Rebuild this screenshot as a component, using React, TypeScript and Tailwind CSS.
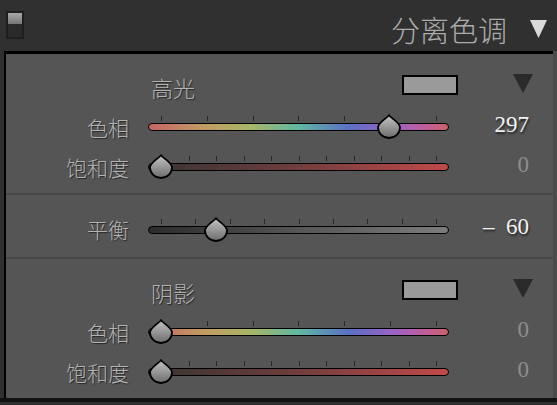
const cjk = "font-['Noto_Sans_CJK_SC',sans-serif] font-light";
const num = "font-['Liberation_Serif',serif]";

const hueBar =
  'bg-[linear-gradient(to_right,#c46666_0%,#c29a62_18%,#a8b666_34%,#5fb8a2_50%,#5a70c4_67%,#9c62c4_82%,#c45e92_94%,#c86468_100%)]';
const satBar = 'bg-[linear-gradient(to_right,#383434_0%,#6a3c3c_45%,#c04a4a_100%)]';
const balBar = 'bg-[linear-gradient(to_right,#2c2c2c_0%,#555555_50%,#7c7c7c_100%)]';

type SliderProps = {
  label: string;
  bar: string;
  ticks: number;
  frac: number;
  value: string;
  active?: boolean;
};

const Thumb = ({ frac }: { frac: number }) => (
  <svg
    width="24"
    height="25"
    viewBox="0 0 24 25"
    className="absolute top-[7px]"
    style={{ left: 13 + frac * 276 - 12 }}
  >
    <defs>
      <linearGradient id="thumbFill" x1="0" y1="0" x2="0" y2="1">
        <stop offset="0" stopColor="#c4c4c4" />
        <stop offset="1" stopColor="#6c6c6c" />
      </linearGradient>
    </defs>
    <path
      d="M12 1.2 C14.5 4.5 23 8.5 23 13.5 A11 10.5 0 0 1 1 13.5 C1 8.5 9.5 4.5 12 1.2 Z"
      fill="url(#thumbFill)"
      stroke="#000"
      strokeWidth="1.8"
    />
  </svg>
);

const SliderRow = ({ label, bar, ticks, frac, value, active }: SliderProps) => (
  <div className="flex h-[40px] items-center">
    <div
      className={`w-[123px] text-right text-[21px] leading-none text-[#b3b3b3] [text-shadow:1px_1px_1px_rgba(0,0,0,0.55)] ${cjk}`}
    >
      {label}
    </div>
    <div className="relative ml-[19px] flex h-[40px] w-[301px] items-center">
      <div className="absolute left-[13px] right-[12px] top-[9px] flex h-[5px] justify-between">
        {Array.from({ length: ticks }).map((_, i) => (
          <div key={i} className="h-[5px] w-px bg-[#262626]" />
        ))}
      </div>
      <div className={`h-[8px] w-full rounded-full border-[1.5px] border-black ${bar}`} />
      <Thumb frac={frac} />
    </div>
    <div
      className={`mb-[6px] w-[80px] whitespace-pre text-right text-[23px] leading-none ${num} ${
        active
          ? 'text-[#f2f2f2] [text-shadow:1px_2px_2px_rgba(0,0,0,0.6)]'
          : 'text-[#8e8e8e]'
      }`}
    >
      {value}
    </div>
  </div>
);

const SectionTitle = ({ title }: { title: string }) => (
  <div className="flex h-[34px] items-start">
    <div
      className={`ml-[145px] mt-[5px] text-[22px] leading-none text-[#b3b3b3] [text-shadow:1px_1px_1px_rgba(0,0,0,0.55)] ${cjk}`}
    >
      {title}
    </div>
    <div className="flex-1" />
    <div className="mt-[4px] h-[20px] w-[56px] border-2 border-black bg-[#9a9a9a]" />
    <svg width="20" height="19" viewBox="0 0 20 19" className="ml-[55px] mr-[20px] mt-[3px]">
      <polygon points="0,0 20,0 10,19" fill="#2a2a2a" />
    </svg>
  </div>
);

export default function App() {
  return (
    <div className="flex h-[405px] w-[557px] flex-col overflow-hidden bg-[#303030]">
      <div className="flex h-[51px] items-start">
        <div className="ml-[6px] mt-[11px] flex h-[28px] w-[18px] flex-col border-2 border-[#1e1e1e] bg-[#2a2a2a]">
          <div className="h-[11px] w-full bg-[linear-gradient(to_bottom,#a8a8a8,#767676)]" />
        </div>
        <div className="flex-1" />
        <div className={`mt-[15px] text-[29px] leading-none text-[#acacac] ${cjk}`}>分离色调</div>
        <svg width="17" height="18" viewBox="0 0 17 18" className="ml-[23px] mr-[10px] mt-[20px]">
          <polygon points="0,0 17,0 8.5,18" fill="#dadada" />
        </svg>
      </div>

      <div className="flex h-[347px]">
        <div className="ml-[4px] flex w-[549px] flex-col border-l-2 border-t-[3px] border-black bg-[#555555]">
          <div className="flex h-[139px] flex-col pt-[17px]">
            <SectionTitle title="高光" />
            <div className="mt-[2px]">
              <SliderRow label="色相" bar={hueBar} ticks={7} frac={297 / 360} value="297" active />
              <SliderRow label="饱和度" bar={satBar} ticks={11} frac={0} value="0" />
            </div>
          </div>
          <div className="h-[2px] bg-[#474747]" />
          <div className="flex h-[63px] flex-col pt-[15px]">
            <SliderRow label="平衡" bar={balBar} ticks={9} frac={0.2} value="–  60" active />
          </div>
          <div className="h-[2px] bg-[#474747]" />
          <div className="flex h-[139px] flex-col pt-[17px]">
            <SectionTitle title="阴影" />
            <div className="mt-[2px]">
              <SliderRow label="色相" bar={hueBar} ticks={7} frac={0} value="0" />
              <SliderRow label="饱和度" bar={satBar} ticks={11} frac={0} value="0" />
            </div>
          </div>
          <div className="flex-1 bg-[#3c3c3c]" />
        </div>
        <div className="w-[4px] bg-[#4a4a4a]" />
      </div>
      <div className="h-[4px] bg-[#111111]" />
    </div>
  );
}
